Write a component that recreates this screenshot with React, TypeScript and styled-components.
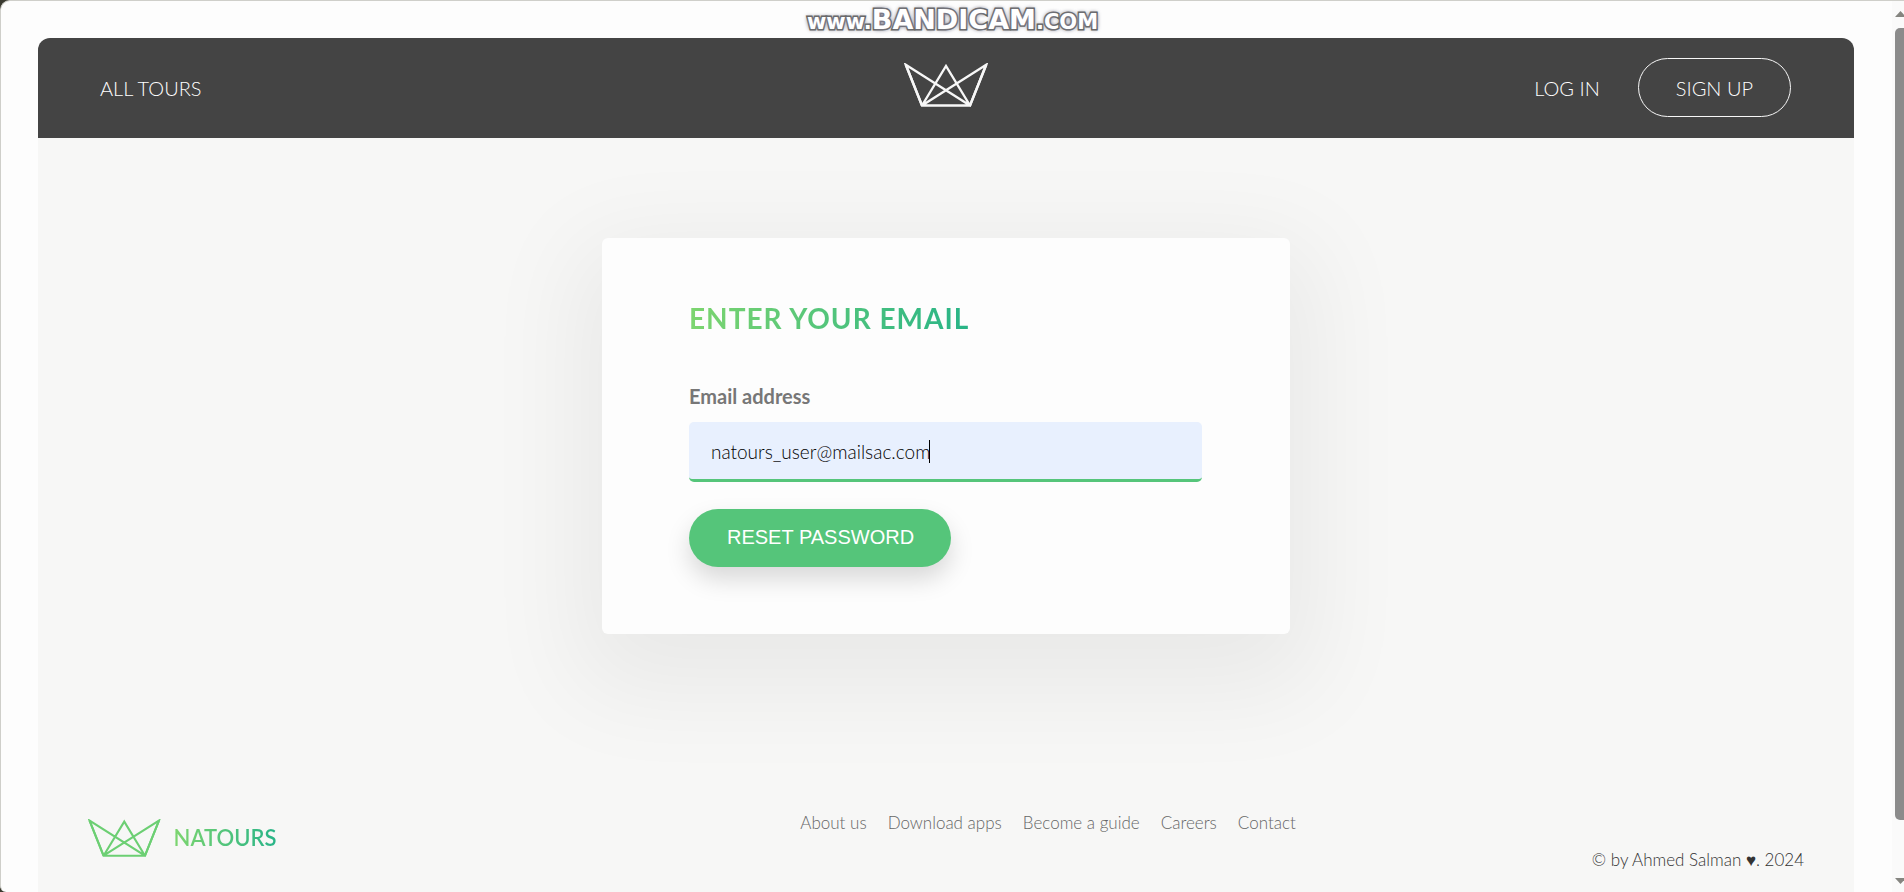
import React from "react";
import styled, { createGlobalStyle, css } from "styled-components";

const GlobalStyle = createGlobalStyle`
  *, *::before, *::after { box-sizing: border-box; margin: 0; padding: 0; }
  body {
    background: #3a3a30;
    color: #777;
    font-family: Lato, "Liberation Sans", sans-serif;
    font-weight: 300;
    overflow: hidden;
  }
  a { color: inherit; text-decoration: none; }
`;

const Window = styled.div`
  position: relative;
  display: flex;
  height: 100vh;
  overflow: hidden;
  background: #fdfdfd;
  border: solid #cfcfca;
  border-width: 1px 0 0 1px;
  border-radius: 10px 0 0 6px;
`;

const Page = styled.div`
  flex: 1;
  display: flex;
  flex-direction: column;
  padding: 37px 38px 0 37px;
`;

const Header = styled.header`
  flex: none;
  display: flex;
  align-items: center;
  height: 100px;
  padding: 0 63px 2px 62px;
  background: #444;
  border-radius: 12px 12px 0 0;
  color: #fff;
  font-size: 20px;
  line-height: 24px;
  text-transform: uppercase;
`;

const Nav = styled.nav<{ $end?: boolean }>`
  flex: 1;
  display: flex;
  align-items: center;
  justify-content: ${(p) => (p.$end ? "flex-end" : "flex-start")};
  gap: 38px;
`;

const NavLink = styled.a<{ $outlined?: boolean }>`
  padding-top: 2px;
  ${(p) =>
    p.$outlined &&
    css`
      padding: 17px 37px 16px;
      border: 1px solid #f7f7f7;
      border-radius: 100px;
    `}
`;

const HeaderLogo = styled.div`
  padding-bottom: 4px;
`;

const CrownSvg = styled.svg<{ $height: number }>`
  display: block;
  height: ${(p) => p.$height}px;
  width: auto;
`;

const Content = styled.div`
  flex: 1;
  display: flex;
  flex-direction: column;
  background: #f7f7f6;
`;

const Main = styled.main`
  padding: 100px 0;
`;

const Card = styled.section`
  width: 100%;
  max-width: 688px;
  margin: 0 auto;
  padding: 62px 88px 67px 87px;
  background: #fdfdfd;
  border-radius: 6px;
  box-shadow: 0 31px 100px 25px rgba(0, 0, 10, 0.06);
`;

const gradientText = css`
  background: linear-gradient(to right, #7dd56f, #28b487);
  background-clip: text;
  -webkit-background-clip: text;
  color: transparent;
  text-transform: uppercase;
`;

const Title = styled.h2`
  ${gradientText}
  width: fit-content;
  margin-bottom: 46px;
  font-size: 28px;
  line-height: 36px;
  font-weight: 700;
  letter-spacing: 1px;
`;

const Label = styled.label`
  display: block;
  margin-bottom: 11px;
  font-size: 20px;
  line-height: 29px;
  font-weight: 700;
`;

const Field = styled.div`
  position: relative;
  margin-bottom: 27px;
`;

const Input = styled.input`
  display: block;
  width: 100%;
  height: 60px;
  padding: 0 22px 1px;
  background: #e8f0fe;
  border: none;
  border-top: 3px solid transparent;
  border-bottom: 3px solid #55c57a;
  border-radius: 5px;
  color: #000;
  caret-color: transparent;
  font: 300 19px Lato, sans-serif;
  outline: none;
`;

const Caret = styled.span`
  position: absolute;
  top: 18px;
  left: 240px;
  width: 1px;
  height: 23px;
  background: #000;
`;

const Button = styled.button`
  display: block;
  padding: 17px 37px 18px 38px;
  border: none;
  border-radius: 100px;
  background: #55c57a;
  box-shadow: 0 12px 25px rgba(0, 0, 0, 0.15);
  color: #fff;
  font: 400 20px/23px "Liberation Sans", Arial, sans-serif;
  text-transform: uppercase;
`;

const Footer = styled.footer`
  display: grid;
  grid-template-columns: 9fr 10fr auto;
  padding: 76px 50px 0;
  font-size: 17px;
  line-height: 26px;
`;

const Brand = styled.a`
  display: flex;
  align-items: center;
  gap: 13px;
  height: 56px;
`;

const BrandName = styled.span`
  ${gradientText}
  font-size: 22px;
  font-weight: 600;
`;

const FooterLinks = styled.ul`
  display: flex;
  gap: 21px;
  list-style: none;
  color: #666;
`;

const Copyright = styled.p`
  align-self: end;
  margin-bottom: -7px;
  color: #333;
`;

const Scrollbar = styled.div`
  flex: none;
  display: flex;
  flex-direction: column;
  align-items: center;
  width: 12px;
  padding: 10px 0 8px 3px;
  background: #fafafa;
`;

const Thumb = styled.div`
  width: 100%;
  flex: 1;
  margin: 11px 0 58px;
  background: #8b8b8b;
  border-radius: 5px 0 0 5px;
`;

const Watermark = styled.div`
  position: absolute;
  top: 4px;
  left: 0;
  width: 100%;
  display: flex;
  justify-content: center;
  align-items: baseline;
  font-family: "DejaVu Sans", sans-serif;
  font-weight: 700;
  font-size: 21px;
  line-height: 30px;
  color: #fff;
  -webkit-text-stroke: 3px #57574f;
  paint-order: stroke fill;
  text-shadow: 0 0 4px #77778a, 0 0 5px #9a9aa8;
  pointer-events: none;
`;

const WatermarkName = styled.span`
  font-size: 27px;
`;

function Crown({ height, color }: { height: number; color: string }) {
  return (
    <CrownSvg $height={height} viewBox="0 0 84 44" fill="none" stroke={color} strokeWidth="2.4" aria-hidden="true">
      <path d="M66 42.5H18L1.8 1.8L66 42.5L82.2 1.8L18 42.5L42 3L66 42.5" strokeLinejoin="miter" />
      <path d="M18 42.5L1.8 1.8M66 42.5L82.2 1.8" />
    </CrownSvg>
  );
}

function Arrow({ down }: { down?: boolean }) {
  return (
    <svg width="9" height="6" viewBox="0 0 9 6" aria-hidden="true">
      <path d={down ? "M0 0H11L5.5 6Z" : "M0 6H11L5.5 0Z"} fill="#858580" />
    </svg>
  );
}

const footerLinks = ["About us", "Download apps", "Become a guide", "Careers", "Contact"];

export default function App() {
  return (
    <>
      <GlobalStyle />
      <Window>
        <Page>
          <Header>
            <Nav>
              <NavLink href="#tours">All tours</NavLink>
            </Nav>
            <HeaderLogo>
              <Crown height={44} color="#f7f7f7" />
            </HeaderLogo>
            <Nav $end>
              <NavLink href="#login">Log in</NavLink>
              <NavLink href="#signup" $outlined>Sign up</NavLink>
            </Nav>
          </Header>
          <Content>
            <Main>
              <Card>
                <Title>Enter your email</Title>
                <form onSubmit={(e) => e.preventDefault()}>
                  <Label htmlFor="email">Email address</Label>
                  <Field>
                    <Input id="email" type="email" defaultValue="natours_user@mailsac.com" />
                    <Caret />
                  </Field>
                  <Button>Reset password</Button>
                </form>
              </Card>
            </Main>
            <Footer>
              <Brand href="#home">
                <Crown height={38} color="#6ccf73" />
                <BrandName>Natours</BrandName>
              </Brand>
              <FooterLinks>
                {footerLinks.map((name) => (
                  <li key={name}>
                    <a href="#footer">{name}</a>
                  </li>
                ))}
              </FooterLinks>
              <Copyright>© by Ahmed Salman ♥. 2024</Copyright>
            </Footer>
          </Content>
        </Page>
        <Scrollbar>
          <Arrow />
          <Thumb />
          <Arrow down />
        </Scrollbar>
        <Watermark>
          www.<WatermarkName>BANDICAM</WatermarkName>.COM
        </Watermark>
      </Window>
    </>
  );
}
